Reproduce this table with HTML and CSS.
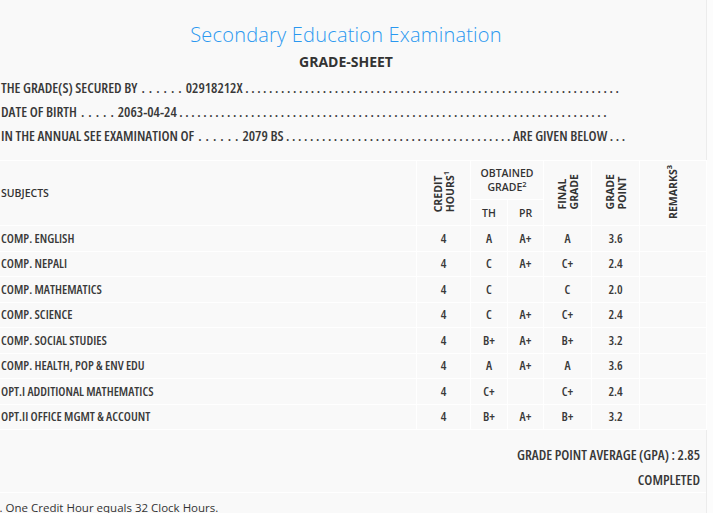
FILE: index.html
```html
<!DOCTYPE html>
<html>
<head>
<meta charset="utf-8">
<title>Grade Sheet</title>
<link rel="stylesheet" href="styles.css">
</head>
<body>
<div class="page">
  <h1 class="title">Secondary Education Examination</h1>
  <div class="sheet">GRADE-SHEET</div>
  <div class="info">
    <p>THE GRADE(S) SECURED BY<span class="grp"> . . . . . . </span>02918212X . . . . . . . . . . . . . . . . . . . . . . . . . . . . . . . . . . . . . . . . . . . . . . . . . . . . . . . . . . . . . . .</p>
    <p>DATE OF BIRTH<span class="grp"> . . . . . </span>2063-04-24 . . . . . . . . . . . . . . . . . . . . . . . . . . . . . . . . . . . . . . . . . . . . . . . . . . . . . . . . . . . . . . . . . . . . . . . .</p>
    <p>IN THE ANNUAL SEE EXAMINATION OF<span class="grp"> . . . . . . </span>2079 BS . . . . . . . . . . . . . . . . . . . . . . . . . . . . . . . . . . . . . . ARE GIVEN BELOW . . .</p>
  </div>
  <table class="grades">
    <colgroup>
      <col class="c-sub"><col class="c-cr"><col class="c-th"><col class="c-pr"><col class="c-fg"><col class="c-gp"><col class="c-rm">
    </colgroup>
    <thead>
      <tr class="h1">
        <th rowspan="2" class="subj">SUBJECTS</th>
        <th rowspan="2"><span class="vert">CREDIT<br>HOURS<sup>1</sup></span></th>
        <th colspan="2" class="obt">OBTAINED<br>GRADE<sup>2</sup></th>
        <th rowspan="2"><span class="vert">FINAL<br>GRADE</span></th>
        <th rowspan="2"><span class="vert">GRADE<br>POINT</span></th>
        <th rowspan="2"><span class="vert">REMARKS<sup>3</sup></span></th>
      </tr>
      <tr class="h2">
        <th>TH</th>
        <th>PR</th>
      </tr>
    </thead>
    <tbody>
      <tr><td class="subj">COMP. ENGLISH</td><td>4</td><td>A</td><td>A+</td><td>A</td><td>3.6</td><td></td></tr>
      <tr><td class="subj">COMP. NEPALI</td><td>4</td><td>C</td><td>A+</td><td>C+</td><td>2.4</td><td></td></tr>
      <tr><td class="subj">COMP. MATHEMATICS</td><td>4</td><td>C</td><td></td><td>C</td><td>2.0</td><td></td></tr>
      <tr><td class="subj">COMP. SCIENCE</td><td>4</td><td>C</td><td>A+</td><td>C+</td><td>2.4</td><td></td></tr>
      <tr><td class="subj">COMP. SOCIAL STUDIES</td><td>4</td><td>B+</td><td>A+</td><td>B+</td><td>3.2</td><td></td></tr>
      <tr><td class="subj">COMP. HEALTH, POP &amp; ENV EDU</td><td>4</td><td>A</td><td>A+</td><td>A</td><td>3.6</td><td></td></tr>
      <tr><td class="subj">OPT.I ADDITIONAL MATHEMATICS</td><td>4</td><td>C+</td><td></td><td>C+</td><td>2.4</td><td></td></tr>
      <tr><td class="subj">OPT.II OFFICE MGMT &amp; ACCOUNT</td><td>4</td><td>B+</td><td>A+</td><td>B+</td><td>3.2</td><td></td></tr>
    </tbody>
  </table>
  <div class="summary">
    <p>GRADE POINT AVERAGE (GPA) : 2.85</p>
    <p>COMPLETED</p>
  </div>
  <div class="notes">
    <p>1. One Credit Hour equals 32 Clock Hours.</p>
  </div>
</div>
</body>
</html>
```
FILE: styles.css
```css
html, body {
  margin: 0;
  padding: 0;
  background: #fcfcfc;
  overflow: hidden;
}
.page {
  margin-left: -14px;
  width: 720px;
  min-height: 513px;
  background: #f9f9f9;
  border-right: 1px solid #ececec;
  padding-top: 23px;
  color: #333;
  font-family: "Open Sans", "Noto Sans", sans-serif;
}
.title {
  margin: 0;
  text-align: center;
  font-family: "Open Sans", sans-serif;
  font-weight: 300;
  font-size: 20px;
  line-height: 24px;
  color: #2a98f0;
  letter-spacing: 0.2px;
}
.sheet {
  margin-top: 8px;
  text-align: center;
  font-size: 14px;
  line-height: 14px;
  font-weight: 700;
  font-stretch: 95%;
  color: #333;
}
.info {
  margin-top: 7px;
  padding-left: 15px;
}
.info p {
  margin: 0;
  font-size: 14.2px;
  line-height: 24px;
  font-weight: 600;
  font-stretch: 75%;
  white-space: nowrap;
  color: #383838;
}
.grp {
  word-spacing: 1.4px;
}
.grades {
  margin-top: 12px;
  width: 720px;
  table-layout: fixed;
  border-collapse: collapse;
}
.c-sub { width: 430px; }
.c-cr { width: 54px; }
.c-th { width: 37px; }
.c-pr { width: 36px; }
.c-fg { width: 48px; }
.c-gp { width: 48px; }
.c-rm { width: 67px; }
.grades th, .grades td {
  border: 1px solid #ffffff;
  padding: 0;
  text-align: center;
  vertical-align: middle;
}
.grades th {
  font-size: 10.5px;
  font-weight: 600;
  line-height: 14px;
  color: #333;
}
.grades th.subj, .grades td.subj {
  text-align: left;
  padding-left: 14px;
  border-left-color: transparent;
}
.grades .h1 { height: 39px; }
.grades .h2 { height: 26px; }
.grades tbody tr { height: 25.5px; }
.grades td {
  font-size: 12.6px;
  font-weight: 600;
  font-stretch: 85%;
  color: #3a3a3a;
  white-space: nowrap;
}
.grades sup {
  font-size: 7.5px;
  line-height: 0;
  vertical-align: 4px;
}
.obt { padding-top: 2px; }
.vert {
  display: inline-block;
  writing-mode: vertical-rl;
  transform: rotate(180deg);
  text-align: left;
  font-weight: 700;
  line-height: 12px;
}
.summary {
  margin-top: 12px;
  padding-right: 6px;
  text-align: right;
  border-bottom: 1px solid #ffffff;
  font-weight: 600;
  font-stretch: 75%;
  font-size: 14.2px;
  color: #383838;
}
.summary p {
  margin: 0;
  line-height: 25px;
}
.notes {
  padding-left: 7px;
  padding-top: 5px;
}
.notes p {
  margin: 0;
  font-size: 11.5px;
  line-height: 20px;
  color: #333;
}
```
